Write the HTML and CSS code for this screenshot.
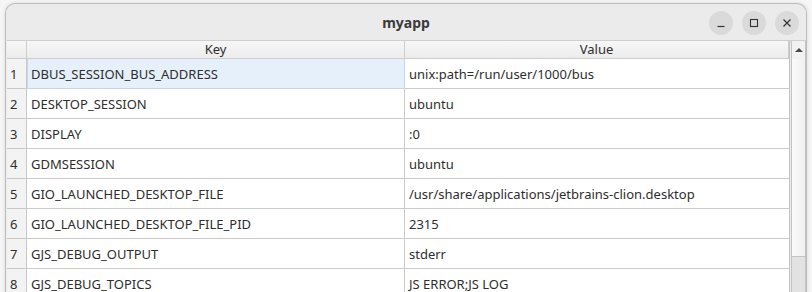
FILE: index.html
```html
<!DOCTYPE html>
<html lang="en">
<head>
  <meta charset="UTF-8">
  <title>myapp</title>
  <link rel="stylesheet" href="styles.css">
</head>
<body>

<div class="window">
  <div class="titlebar">
    <span class="title">myapp</span>
    <div class="controls">
      <span class="ctl">
        <svg width="10" height="10" viewBox="0 0 10 10"><path d="M1.5 8.5h7" stroke="#333" stroke-width="1.2"/></svg>
      </span>
      <span class="ctl">
        <svg width="10" height="10" viewBox="0 0 10 10"><rect x="1.5" y="1.5" width="7" height="7" fill="none" stroke="#333" stroke-width="1.1"/></svg>
      </span>
      <span class="ctl">
        <svg width="10" height="10" viewBox="0 0 10 10"><path d="M1.5 1.5l7 7M8.5 1.5l-7 7" stroke="#333" stroke-width="1.2"/></svg>
      </span>
    </div>
  </div>

  <div class="view">
    <div class="table">
      <div class="corner"></div>
      <div class="hdr">Key</div>
      <div class="hdr">Value</div>

      <div class="num">1</div>
      <div class="cell selected">DBUS_SESSION_BUS_ADDRESS</div>
      <div class="cell">unix:path=/run/user/1000/bus</div>

      <div class="num">2</div>
      <div class="cell">DESKTOP_SESSION</div>
      <div class="cell">ubuntu</div>

      <div class="num">3</div>
      <div class="cell">DISPLAY</div>
      <div class="cell">:0</div>

      <div class="num">4</div>
      <div class="cell">GDMSESSION</div>
      <div class="cell">ubuntu</div>

      <div class="num">5</div>
      <div class="cell">GIO_LAUNCHED_DESKTOP_FILE</div>
      <div class="cell">/usr/share/applications/jetbrains-clion.desktop</div>

      <div class="num">6</div>
      <div class="cell">GIO_LAUNCHED_DESKTOP_FILE_PID</div>
      <div class="cell">2315</div>

      <div class="num">7</div>
      <div class="cell">GJS_DEBUG_OUTPUT</div>
      <div class="cell">stderr</div>

      <div class="num">8</div>
      <div class="cell">GJS_DEBUG_TOPICS</div>
      <div class="cell">JS ERROR;JS LOG</div>
    </div>

    <div class="scrollbar">
      <div class="arrow"></div>
      <div class="handle"></div>
    </div>
  </div>
</div>

</body>
</html>
```

FILE: styles.css
```css
body {
  margin: 0;
  background: #f6f6f6;
  font-family: 'Noto Sans', 'DejaVu Sans', sans-serif;
  color: #2e2e2e;
  overflow: hidden;
}

.window {
  margin: 3px 0 0 5px;
  width: 800px;
  height: 300px;
  background: #ebebeb;
  border: 1px solid #bdbdbd;
  border-bottom: none;
  border-radius: 10px 10px 0 0;
  box-shadow: 0 0 4px rgba(0,0,0,0.12);
  display: flex;
  flex-direction: column;
}

.titlebar {
  height: 36px;
  position: relative;
  display: flex;
  align-items: center;
  justify-content: center;
  flex-shrink: 0;
}

.title {
  font-size: 14px;
  font-weight: bold;
  color: #3a3a3a;
}

.controls {
  position: absolute;
  right: 7px;
  top: 7px;
  display: flex;
  gap: 9px;
}

.ctl {
  width: 24px;
  height: 24px;
  border-radius: 50%;
  background: #dadada;
  display: flex;
  align-items: center;
  justify-content: center;
}

.view {
  display: flex;
  margin-left: 1px;
  border-top: 1px solid #cfcfcf;
}

.table {
  display: grid;
  grid-template-columns: 20px 378px 384px;
  grid-template-rows: 18px;
  grid-auto-rows: 30px;
  background: #ffffff;
  border-right: 1px solid #c4c4c4;
  font-size: 13px;
}

.corner, .hdr {
  background: linear-gradient(to bottom, #f7f7f7, #ececec);
  border-right: 1px solid #cdcdcd;
  border-bottom: 1px solid #cdcdcd;
}

.hdr {
  display: flex;
  align-items: center;
  justify-content: center;
  font-size: 13px;
  line-height: 1;
}

.hdr:last-child {
  border-right: none;
}

.num {
  background: #f3f3f3;
  border-right: 1px solid #c8c8c8;
  border-bottom: 1px solid #c8c8c8;
  display: flex;
  align-items: center;
  padding-left: 3px;
}

.cell {
  border-right: 1px solid #cbcbcb;
  border-bottom: 1px solid #cbcbcb;
  display: flex;
  align-items: center;
  padding-left: 4px;
  white-space: nowrap;
  overflow: hidden;
}

.cell:nth-child(3n) {
  border-right: none;
}

.cell.selected {
  background: #e6f0fa;
  border: 1px solid #c3d6ea;
  border-top: none;
  padding-left: 3px;
}

.scrollbar {
  width: 15px;
  margin-left: 1px;
  background: #e2e2e2;
  border-left: 1px solid #c4c4c4;
  border-right: 1px solid #c4c4c4;
  display: flex;
  flex-direction: column;
}

.arrow {
  height: 18px;
  background: #f2f2f2;
  display: flex;
  align-items: center;
  justify-content: center;
}

.arrow::before {
  content: '';
  border-left: 4px solid transparent;
  border-right: 4px solid transparent;
  border-bottom: 4px solid #4a4a4a;
}

.handle {
  height: 197px;
  background: linear-gradient(to right, #fafafa, #f0f0f0);
  border-bottom: 1px solid #c4c4c4;
}
```
